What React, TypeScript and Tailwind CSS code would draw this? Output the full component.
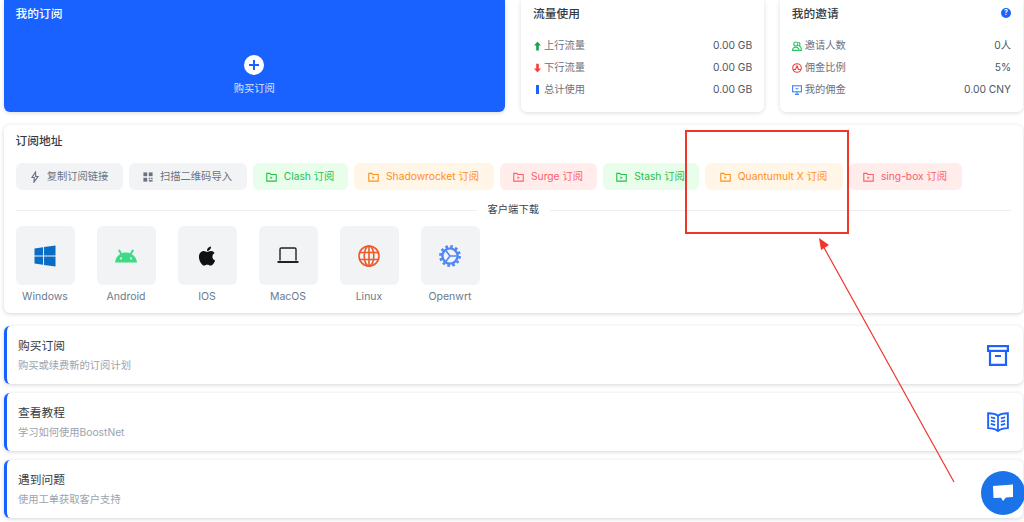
import { FaApple, FaWindows } from "react-icons/fa"
import { SiAndroid } from "react-icons/si"

const font = "font-['Inter','Noto_Sans_CJK_SC',sans-serif]"

function FolderIcon() {
  return (
    <svg width="11" height="10" viewBox="0 0 12 11" fill="none" stroke="currentColor" strokeWidth="1.2">
      <path d="M.8 1.500h3.400l1 1.300h6v7.200H.8z" />
      <path d="M4.800 4.800v3l2.600-1.500z" fill="currentColor" stroke="none" />
    </svg>
  )
}

function CopyIcon() {
  return (
    <svg width="10" height="12" viewBox="0 0 10 12" fill="none" stroke="#6b7280" strokeWidth="1.2">
      <path d="M5.500 1 2 6.500h2.300L4 11l4-5.500H5.700z" />
    </svg>
  )
}

function QrIcon() {
  return (
    <svg width="10" height="10" viewBox="0 0 10 10" fill="#6b7280">
      <rect x="0.4" y="0.4" width="3.8" height="3.8" />
      <rect x="5.8" y="0.4" width="3.8" height="3.8" />
      <rect x="0.4" y="5.8" width="3.8" height="3.8" />
      <rect x="5.8" y="5.8" width="1.5" height="1.5" />
      <rect x="8.100" y="5.8" width="1.5" height="1.5" />
      <rect x="5.800" y="8.100" width="3.8" height="1.5" />
    </svg>
  )
}

const links = [
  { label: "Clash 订阅", cls: "w-[95px] bg-[#e8fdea] text-[#25c04a]" },
  { label: "Shadowrocket 订阅", cls: "w-[140px] bg-[#fff6e8] text-[#ff8f1f]" },
  { label: "Surge 订阅", cls: "w-[97px] bg-[#ffeceb] text-[#f8616b]" },
  { label: "Stash 订阅", cls: "w-[96px] bg-[#e8fdea] text-[#25c04a]" },
  { label: "Quantumult X 订阅", cls: "w-[138px] bg-[#fff6e8] text-[#ff8f1f]" },
  { label: "sing-box 订阅", cls: "w-[113px] bg-[#ffeceb] text-[#f8616b]" },
]

function LaptopIcon() {
  return (
    <svg width="22" height="18" viewBox="0 0 22 18" fill="none" stroke="#222222">
      <path d="M3 13.500V2.200A1.200 1.200 0 0 1 4.200 1h13.600A1.200 1.200 0 0 1 19 2.200v11.300" strokeWidth="1.400" />
      <path d="M.5 15h21" strokeWidth="2" />
    </svg>
  )
}

function GlobeIcon() {
  return (
    <svg width="22" height="22" viewBox="0 0 22 22" fill="none" stroke="#ea5a2a" strokeWidth="1.6">
      <circle cx="11" cy="11" r="10" />
      <ellipse cx="11" cy="11" rx="4.800" ry="10" />
      <path d="M11 1v20M1.600 7.500h18.800M1.600 14.500h18.800" />
    </svg>
  )
}

function GearIcon() {
  return (
    <svg width="22" height="22" viewBox="0 0 22 22" fill="none" stroke="#4f86f7">
      <circle cx="11" cy="11" r="7.600" strokeWidth="2.400" />
      <circle cx="11" cy="11" r="9.600" strokeWidth="2.600" strokeDasharray="2.600 2.430" />
      <path d="M11 11 6.800 5.600M11 11h6.600M11 11l-4.200 5.400" strokeWidth="1.600" />
    </svg>
  )
}

const clients = [
  { name: "Windows", icon: <FaWindows size={24} color="#0a6cc4" /> },
  { name: "Android", icon: <SiAndroid size={22} color="#3ddc84" /> },
  { name: "IOS", icon: <FaApple size={22} color="#111111" /> },
  { name: "MacOS", icon: <LaptopIcon /> },
  { name: "Linux", icon: <GlobeIcon /> },
  { name: "Openwrt", icon: <GearIcon /> },
]

function ArchiveIcon() {
  return (
    <svg width="22" height="21" viewBox="0 0 22 21" fill="none" stroke="#1a63ff" strokeWidth="2.200">
      <rect x="1.100" y="1.100" width="19.800" height="4.800" />
      <path d="M3 6v13.900h16V6M8 11h6" />
    </svg>
  )
}

function BookIcon() {
  return (
    <svg width="22" height="22" viewBox="0 0 23 22" fill="none" stroke="#1a63ff" strokeWidth="2">
      <path d="M11.500 4.500C9 2.500 5 1.800 1.200 1.800v15.600c4 0 7.600.8 10.300 3 2.700-2.200 6.300-3 10.300-3V1.800c-3.800 0-7.800.7-10.300 2.700z" />
      <path d="M11.500 4.500v16M4 6l4.500 1.200M4 9.500l4.500 1.200M4 13l4.500 1.200M19 6l-4.500 1.200M19 9.500l-4.500 1.200M19 13l-4.500 1.200" strokeWidth="1.800" />
    </svg>
  )
}

const actions = [
  { title: "购买订阅", desc: "购买或续费新的订阅计划", icon: <ArchiveIcon /> },
  { title: "查看教程", desc: "学习如何使用BoostNet", icon: <BookIcon /> },
  { title: "遇到问题", desc: "使用工单获取客户支持", icon: null },
]

const traffic = [
  { label: "上行流量", value: "0.00 GB", icon: <svg width="7" height="10" viewBox="0 0 8 10" fill="#16a34a"><path d="M4 0 8 4.500H5.500V10h-3V4.500H0z" /></svg> },
  { label: "下行流量", value: "0.00 GB", icon: <svg width="7" height="10" viewBox="0 0 8 10" fill="#ef4444"><path d="M4 10 8 5.500H5.500V0h-3v5.500H0z" /></svg> },
  { label: "总计使用", value: "0.00 GB", icon: <span className="block h-[9px] w-[3px] bg-[#1a63ff]" /> },
]

const invite = [
  {
    label: "邀请人数",
    value: "0人",
    icon: (
      <svg width="10" height="10" viewBox="0 0 10 10" fill="none" stroke="#22c55e" strokeWidth="1.100">
        <circle cx="3.800" cy="3" r="2" />
        <path d="M.6 9.400c0-2 1.400-3.200 3.200-3.200S7 7.400 7 9.400zM6.500 1.200c1.500 0 2.200 2.800.4 3.600 1.600.4 2.500 2 2.500 4.600H7.800" />
      </svg>
    ),
  },
  {
    label: "佣金比例",
    value: "5%",
    icon: (
      <svg width="10" height="10" viewBox="0 0 10 10" fill="none" stroke="#ef4444" strokeWidth="1.100">
        <circle cx="5" cy="5" r="4.300" />
        <path d="M3.300 7 5 2.800 6.700 7M1 6.500h2.300M6.700 6.500H9" />
      </svg>
    ),
  },
  {
    label: "我的佣金",
    value: "0.00 CNY",
    icon: (
      <svg width="10" height="10" viewBox="0 0 10 10" fill="none" stroke="#3b82f6" strokeWidth="1.100">
        <rect x=".6" y=".8" width="8.800" height="6" />
        <path d="M5 6.800v2.600M3 9.400h4M3.500 3.800h3" />
      </svg>
    ),
  },
]

function StatCard({ title, rows, help, className, labelGap }: { title: string; rows: typeof invite; help?: boolean; className: string; labelGap: string }) {
  return (
    <div className={`${className} h-[112px] rounded-b-md bg-white pr-[12px] pl-[11.5px] shadow-[0_1px_4px_rgba(15,23,42,0.15)]`}>
      <div className="flex h-[29px] items-center justify-between">
        <h3 className="text-[11.74px] leading-none font-medium text-[#333a45]">{title}</h3>
        {help && (
          <span className="mb-[4px] flex h-[10px] w-[10px] items-center justify-center rounded-full bg-[#1a63ff] text-[7px] leading-none font-bold text-white">?</span>
        )}
      </div>
      <div className="mt-[6px] flex flex-col">
        {rows.map((r) => (
          <div key={r.label} className="flex h-[22px] items-center justify-between text-[10.27px]">
            <span className={`flex items-center ${labelGap} text-[#6b7280]`}>
              <span className="flex w-[10px] justify-center">{r.icon}</span>
              {r.label}
            </span>
            <span className="text-[#4b5563]">{r.value}</span>
          </div>
        ))}
      </div>
    </div>
  )
}

export default function App() {
  return (
    <div className={`${font} relative h-[522px] w-[1024px] overflow-hidden bg-white pr-[1px] pl-[3.5px]`}>
      <div className="flex gap-[16px]">
        <div className="flex h-[112px] w-[502px] flex-col rounded-b-md bg-[#1a62ff] px-3 shadow-[0_1px_4px_rgba(15,23,42,0.15)]">
          <h3 className="flex h-[29px] items-center text-[11.74px] leading-none font-medium text-white">我的订阅</h3>
          <div className="mt-[26px] flex flex-col items-center">
            <span className="flex h-5 w-5 items-center justify-center rounded-full bg-white">
              <svg width="10" height="10" viewBox="0 0 10 10" stroke="#1a62ff" strokeWidth="2"><path d="M5 0v10M0 5h10" /></svg>
            </span>
            <span className="mt-[6px] text-[10.27px] leading-[14px] text-[#dbe6ff]">购买订阅</span>
          </div>
        </div>
        <StatCard title="流量使用" rows={traffic} labelGap="gap-[1px]" className="ml-[0.5px] w-[243px]" />
        <StatCard title="我的邀请" rows={invite} labelGap="gap-[3px]" help className="w-[243px]" />
      </div>

      <div className="mt-[13px] h-[188px] rounded-md bg-white px-3 shadow-[0_1px_4px_rgba(15,23,42,0.18)]">
        <h3 className="pt-[9px] text-[11.74px] leading-[14px] font-medium text-[#333a45]">订阅地址</h3>
        <div className="mt-[15px] flex gap-[6px] text-[10.27px]">
          <div className="flex h-[27px] w-[107px] items-center justify-center gap-[7px] rounded-md bg-[#f1f3f5] text-[#6b7280]">
            <CopyIcon />
            复制订阅链接
          </div>
          <div className="flex h-[27px] w-[118px] items-center justify-center gap-[7px] rounded-md bg-[#f1f3f5] text-[#6b7280]">
            <QrIcon />
            扫描二维码导入
          </div>
          {links.map((l) => (
            <div key={l.label} className={`${l.cls} flex h-[27px] items-center justify-center gap-[7px] rounded-md`}>
              <FolderIcon />
              {l.label}
            </div>
          ))}
        </div>
        <div className="mt-[14px] flex h-[12px] items-center gap-[11px] text-[10.27px] text-[#374151]">
          <span className="h-[1px] flex-1 bg-[#eceef1]" />
          客户端下载
          <span className="h-[1px] flex-1 bg-[#eceef1]" />
        </div>
        <div className="mt-[10px] flex gap-[22px]">
          {clients.map((c) => (
            <div key={c.name} className="flex w-[59px] flex-col items-center">
              <div className="flex h-[59px] w-[59px] items-center justify-center rounded-md bg-[#f1f3f5]">{c.icon}</div>
              <span className="mt-[5px] text-[10.5px] leading-[14px] text-[#6b7a8c]">{c.name}</span>
            </div>
          ))}
        </div>
      </div>

      <div className="mt-[13px] flex flex-col gap-[9px]">
        {actions.map((a) => (
          <div key={a.title} className="flex h-[58px] items-center justify-between rounded-md border-l-[3px] border-[#1a62ff] bg-white pr-[14px] pl-[11.5px] shadow-[0_1px_4px_rgba(15,23,42,0.18)]">
            <div>
              <div className="text-[11.74px] leading-[16px] text-[#333a45]">{a.title}</div>
              <div className="mt-[4px] text-[10.27px] leading-[14px] text-[#9ca3af]">{a.desc}</div>
            </div>
            {a.icon}
          </div>
        ))}
      </div>

      {/* red annotation drawn over the screenshot */}
      <div className="absolute top-[130px] left-[685px] h-[104px] w-[164px] border-[2px] border-[#f0352b]" />
      <svg className="absolute top-0 left-0" width="1024" height="522" fill="none">
        <path d="M954 482 822 244" stroke="#f0352b" strokeWidth="1.2" />
        <path d="M819 238 821 250 829 245z" fill="#f0352b" />
      </svg>

      <div className="absolute top-[471px] left-[981px] flex h-[44px] w-[44px] items-center justify-center rounded-full bg-[#1a73e8]">
        <svg width="20" height="18" viewBox="0 0 20 18" fill="white">
          <path d="M0 2 20 .5V13l-7 .5L10 17l-2-3.200-7.500.2z" />
        </svg>
      </div>
    </div>
  )
}
